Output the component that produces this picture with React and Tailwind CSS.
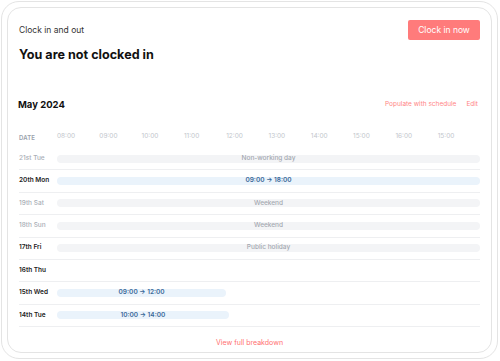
const hours = ["08:00", "09:00", "10:00", "11:00", "12:00", "13:00", "14:00", "15:00", "16:00", "15:00"];

const rows = [
  { label: "21st Tue", muted: true, bar: { kind: "gray", text: "Non-working day", w: "100%" } },
  { label: "20th Mon", muted: false, bar: { kind: "blue", text: "09:00 → 18:00", w: "100%" } },
  { label: "19th Sat", muted: true, bar: { kind: "gray", text: "Weekend", w: "100%" } },
  { label: "18th Sun", muted: true, bar: { kind: "gray", text: "Weekend", w: "100%" } },
  { label: "17th Fri", muted: false, bar: { kind: "gray", text: "Public holiday", w: "100%" } },
  { label: "16th Thu", muted: false, bar: null },
  { label: "15th Wed", muted: false, bar: { kind: "blue", text: "09:00 → 12:00", w: "40%" } },
  { label: "14th Tue", muted: false, bar: { kind: "blue", text: "10:00 → 14:00", w: "40.6%" } },
];

const Bar = ({ bar }) => {
  if (!bar) return null;
  const blue = bar.kind === "blue";
  return (
    <div
      className={
        blue
          ? "h-[8px] rounded-full bg-[#eaf3fb] flex items-center justify-center text-[6.5px] font-semibold text-[#3a6a9a]"
          : "h-[8px] rounded-full bg-[#f3f4f6] flex items-center justify-center text-[6.5px] font-medium text-[#a3a8b0]"
      }
      style={{ width: bar.w }}
    >
      {bar.text}
    </div>
  );
};

export default function App() {
  return (
    <div className="w-[500px] h-[361px] bg-white pl-[1px] pt-[1px] font-['Inter',sans-serif]">
      <div className="w-[497px] h-[358px] border border-[#e4e4e4] rounded-[18px] p-[5px]">
        <div className="h-full border border-[#e4e4e4] rounded-[14px] px-[11px] pt-[12px]">
          <div className="flex items-center justify-between h-[20px]">
            <span className="text-[8.5px] text-[#333]">Clock in and out</span>
            <button className="h-[20px] w-[72px] rounded-[2px] bg-[#ff7b7b] text-[8.5px] text-white">
              Clock in now
            </button>
          </div>
          <h1 className="mt-[7px] text-[12.6px] leading-[16px] font-bold text-[#111]">You are not clocked in</h1>

          <div className="mt-[36px] flex items-center justify-between h-[12px]">
            <span className="text-[9.5px] font-bold text-[#111] -ml-[1px]">May 2024</span>
            <div className="flex items-center gap-[10px] pr-[2px] text-[6.5px] text-[#ff8585]">
              <span>Populate with schedule</span>
              <span>Edit</span>
            </div>
          </div>

          <div className="mt-[21px] flex items-center h-[10px]">
            <div className="w-[38px] text-[6px] font-semibold tracking-wide text-[#9aa1ab]">DATE</div>
            <div className="flex-1 flex">
              {hours.map((h, i) => (
                <div key={i} className="flex-1 text-[6.5px] text-[#c2c6cc]">
                  {h}
                </div>
              ))}
            </div>
          </div>

          <div className="mt-[6px]">
            {rows.map((r) => (
              <div key={r.label} className="flex items-center h-[22.4px] border-b border-[#eeeff1]">
                <div
                  className={
                    r.muted
                      ? "w-[38px] text-[6.5px] font-medium text-[#a9aeb6]"
                      : "w-[38px] text-[6.5px] font-semibold text-[#222]"
                  }
                >
                  {r.label}
                </div>
                <div className="flex-1">
                  <Bar bar={r.bar} />
                </div>
              </div>
            ))}
          </div>

          <div className="mt-[11px] text-center text-[7px] text-[#ff7070]">View full breakdown</div>
        </div>
      </div>
    </div>
  );
}
